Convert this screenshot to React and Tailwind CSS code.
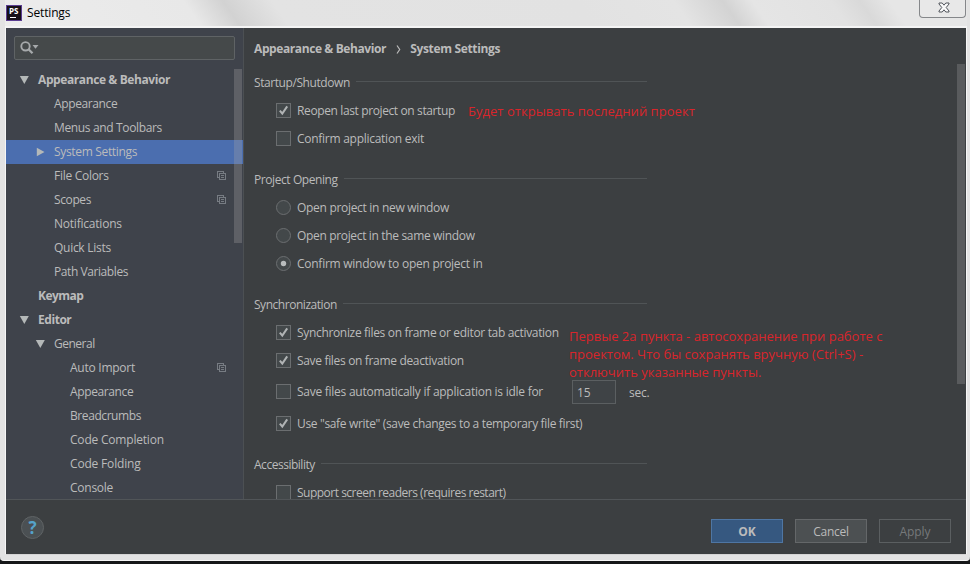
import React from "react";

const tree = [
  { label: "Appearance & Behavior", depth: 0, arrow: "down", bold: true, track: "tracking-[-0.4px]" },
  { label: "Appearance", depth: 1, track: "tracking-[-0.38px]" },
  { label: "Menus and Toolbars", depth: 1, track: "tracking-[-0.35px]" },
  { label: "System Settings", depth: 1, arrow: "right", selected: true, track: "tracking-[-0.33px]" },
  { label: "File Colors", depth: 1, copy: true, track: "tracking-[-0.28px]" },
  { label: "Scopes", depth: 1, copy: true, track: "tracking-[-0.38px]" },
  { label: "Notifications", depth: 1, track: "tracking-[-0.22px]" },
  { label: "Quick Lists", depth: 1, track: "tracking-[-0.28px]" },
  { label: "Path Variables", depth: 1, track: "tracking-[-0.42px]" },
  { label: "Keymap", depth: 0, bold: true, track: "tracking-[-0.55px]" },
  { label: "Editor", depth: 0, arrow: "down", bold: true, track: "tracking-[-0.45px]" },
  { label: "General", depth: 1, arrow: "down", track: "tracking-[-0.5px]" },
  { label: "Auto Import", depth: 2, copy: true, track: "tracking-[-0.25px]" },
  { label: "Appearance", depth: 2, track: "tracking-[-0.38px]" },
  { label: "Breadcrumbs", depth: 2, track: "tracking-[-0.42px]" },
  { label: "Code Completion", depth: 2, track: "tracking-[-0.2px]" },
  { label: "Code Folding", depth: 2, track: "tracking-[-0.18px]" },
  { label: "Console", depth: 2, track: "tracking-[-0.25px]" },
];

const indents = ["pl-[13px]", "pl-[29px]", "pl-[45px]"];

function Arrow({ dir }) {
  return (
    <svg className="w-[10px] h-[10px] shrink-0 fill-[#b4b8b8]" viewBox="0 0 10 10">
      {dir === "down" && <path d="M0.8 1H9.8L5.3 9Z" />}
      {dir === "right" && <path d="M1.8 0.8V9.2L9.5 5Z" />}
    </svg>
  );
}

function CopyIcon() {
  return (
    <svg className="w-[10px] h-[10px] shrink-0 fill-none stroke-[#777c83]" viewBox="0 0 10 10" shapeRendering="crispEdges">
      <path d="M2.5 6.5H0.5V0.5H6.5V2.5" />
      <rect x="2.5" y="2.5" width="6" height="6" />
      <path d="M4 4.5H7M4 6.5H7" />
    </svg>
  );
}

function TreeRow({ item }) {
  return (
    <div className={`flex h-6 shrink-0 items-center pr-4 ${indents[item.depth]} ${item.selected ? "bg-[#4b6eaf]" : ""}`}>
      <Arrow dir={item.arrow} />
      <span className={`ml-[9px] flex-1 whitespace-nowrap ${item.bold ? "font-bold" : ""} ${item.track}`}>{item.label}</span>
      {item.copy && <CopyIcon />}
    </div>
  );
}

function Heading({ children, className = "", track = "" }) {
  return (
    <div className={`mb-px flex h-[26px] w-[393px] shrink-0 items-center gap-[6px] ${className}`}>
      <span className={`whitespace-nowrap ${track}`}>{children}</span>
      <div className="mb-1 h-px flex-1 bg-[#505456]" />
    </div>
  );
}

function Check({ on }) {
  return (
    <svg className="mb-px h-[15px] w-[15px] shrink-0" viewBox="0 0 15 15">
      <rect x="0.5" y="0.5" width="14" height="14" fill="#43484a" stroke="#6b6e70" />
      {on && <path d="M3.8 7.6L6.3 10.5L11.2 3.4" fill="none" stroke="#b0b3b4" strokeWidth="2" />}
    </svg>
  );
}

function Radio({ on }) {
  return (
    <svg className="mb-px h-[15px] w-[15px] shrink-0" viewBox="0 0 15 15">
      <circle cx="7.5" cy="7.5" r="7" fill="#43484a" stroke="#6b6e70" />
      {on && <circle cx="7.5" cy="7.5" r="2.7" fill="#b9bcbd" />}
    </svg>
  );
}

function Option({ radio, on, children, height = "h-7", track = "", after }) {
  return (
    <div className={`flex shrink-0 items-center pl-[22px] ${height}`}>
      {radio ? <Radio on={on} /> : <Check on={on} />}
      <span className={`ml-[6px] whitespace-nowrap ${track}`}>{children}</span>
      {after}
    </div>
  );
}

function Sidebar() {
  return (
    <aside className="relative flex w-[237px] shrink-0 flex-col overflow-hidden bg-[#3f434b]">
      <div className="mx-2 mt-2 mb-2 flex h-6 shrink-0 items-center rounded-[2px] border border-[#5f6365] bg-[#45494a] pl-[5px]">
        <svg className="h-[14px] w-[19px]" viewBox="0 0 19 14" fill="none">
          <circle cx="5.5" cy="5.3" r="4.2" stroke="#a6a9ab" strokeWidth="1.9" />
          <path d="M8.5 8.3L12.5 12.3" stroke="#a6a9ab" strokeWidth="2.3" />
          <path d="M12.5 4H18.5L15.5 7.7Z" fill="#a6a9ab" />
        </svg>
      </div>
      {tree.map((item, i) => (
        <TreeRow key={i} item={item} />
      ))}
      <div className="absolute top-[41px] left-[228px] h-[174px] w-2 bg-[#a6a6a6]/30" />
    </aside>
  );
}

function Content() {
  return (
    <main className="relative flex flex-1 flex-col overflow-hidden border-l border-[#4c5053] pl-[10px]">
      <div className="flex h-[42px] shrink-0 items-center font-bold">
        <span className="whitespace-nowrap tracking-[-0.4px]">Appearance &amp; Behavior</span>
        <svg className="mr-[9px] ml-[10px] h-[9px] w-[5px]" viewBox="0 0 5 9" fill="none" stroke="#bbbbbb" strokeWidth="1.2">
          <path d="M1 0.5L3.7 4.5L1 8.5" />
        </svg>
        <span className="whitespace-nowrap tracking-[-0.33px]">System Settings</span>
      </div>
      <Heading track="tracking-[-0.42px]">Startup/Shutdown</Heading>
      <Option
        on
        track="tracking-[-0.38px]"
        after={
          <span className="ml-[13px] text-[13px] tracking-[0.04px] whitespace-nowrap text-[#d9252b]">
            Будет открывать последний проект
          </span>
        }
      >
        Reopen last project on startup
      </Option>
      <Option track="tracking-[-0.27px]">Confirm application exit</Option>
      <Heading className="mt-[14px]" track="tracking-[-0.42px]">Project Opening</Heading>
      <Option radio track="tracking-[-0.3px]">Open project in new window</Option>
      <Option radio track="tracking-[-0.34px]">Open project in the same window</Option>
      <Option radio on track="tracking-[-0.26px]">Confirm window to open project in</Option>
      <Heading className="mt-[14px]" track="tracking-[-0.46px]">Synchronization</Heading>
      <Option on track="tracking-[-0.33px]">Synchronize files on frame or editor tab activation</Option>
      <Option on track="tracking-[-0.33px]">Save files on frame deactivation</Option>
      <div className="flex h-[34px] shrink-0 items-center">
        <div className="w-[318px]">
          <Option track="tracking-[-0.26px]">Save files automatically if application is idle for</Option>
        </div>
        <div className="flex h-6 w-11 items-center border border-[#5b5f61] bg-[#3f4346] pt-px pl-1">15</div>
        <span className="ml-[13px] pt-px tracking-[-0.2px]">sec.</span>
      </div>
      <Option on height="h-[30px]" track="tracking-[-0.34px]">Use "safe write" (save changes to a temporary file first)</Option>
      <Heading className="mt-[13px]" track="tracking-[-0.48px]">Accessibility</Heading>
      <Option track="tracking-[-0.5px]">Support screen readers (requires restart)</Option>
      <div className="absolute top-[299px] left-[325px] text-[13px] leading-[18px] whitespace-nowrap text-[#d9252b]">
        <div>Первые 2а пункта - автосохранение при работе с</div>
        <div>проектом. Что бы сохранять вручную (Ctrl+S) -</div>
        <div>отключить указанные пункты.</div>
      </div>
      <div className="absolute top-[36px] left-[713px] h-[320px] w-2 bg-[#595b5d]" />
    </main>
  );
}

function Footer() {
  return (
    <footer className="flex h-[55px] shrink-0 items-center border-t border-[#515558] pr-[15px] pl-[15px]">
      <div className="flex h-[23px] w-[23px] items-center justify-center rounded-full border border-[#5f6365] bg-[#4b5053] text-[17px] leading-none font-bold text-[#55a3cb]">
        ?
      </div>
      <div className="mt-2 ml-auto flex gap-3">
        <div className="flex h-6 w-[72px] items-center justify-center border border-[#4f76a3] bg-[#365880] pt-px font-bold">OK</div>
        <div className="flex h-6 w-[72px] items-center justify-center border border-[#646769] bg-[#4c5052] pt-px tracking-[-0.25px]">Cancel</div>
        <div className="flex h-6 w-[72px] items-center justify-center border border-[#5b5f61] pt-px tracking-[-0.1px] text-[#76797b]">Apply</div>
      </div>
    </footer>
  );
}

export default function App() {
  return (
    <div className="flex h-[564px] w-[970px] flex-col overflow-hidden bg-[#151718] font-['Open_Sans','Noto_Sans',sans-serif] text-[12px] leading-4 text-[#bbbbbb]">
      <div className="flex h-[561px] flex-col rounded-b-[4px] border-b border-[#f5f5f5] bg-[#e3e3e3] pr-[3px] pb-[5px] pl-[5px]">
        <header className="flex h-[26px] shrink-0 items-start justify-between bg-[linear-gradient(55deg,#ececec_0%,#e8e8e8_20%,#d2d2d2_24%,#e3e3e3_29%,#e2e2e2_60%,#e4e4e4_70%,#d3d3d3_75%,#e5e5e5_78%,#e2e2e2_86%,#d9d9d9_89%,#e6e6e6_92%)]">
          <div className="flex h-[26px] items-center">
            <div className="ml-px flex h-4 w-4 flex-col items-start border border-[#5a3d91] bg-[#171018] pl-[2px] text-[8px] leading-[9px] font-bold text-white">
              PS
              <div className="mt-[2px] ml-px h-px w-[6px] bg-white" />
            </div>
            <span className="ml-[5px] tracking-[-0.15px] text-black">Settings</span>
          </div>
          <div className="mr-px flex h-[18px] w-[47px] items-center justify-center rounded-b-[4px] border border-t-0 border-[#85878a] bg-[#e8e8e8]">
            <svg className="mt-[-2px] ml-[2px] h-[11px] w-[12px]" viewBox="0 0 12 11">
              <path d="M1 1H4.2L6 3.2L7.8 1H11V2L8.2 5.5L11 9V10H7.8L6 7.8L4.2 10H1V9L3.8 5.5L1 2Z" fill="#fafafa" stroke="#50545b" />
            </svg>
          </div>
        </header>
        <div className="flex min-h-0 flex-1 flex-col border border-t-2 border-[#f6f6f6] border-t-[#f4f4f4] border-b-[#d5d5d5] bg-[#3c3f41]">
          <div className="flex min-h-0 flex-1">
            <Sidebar />
            <Content />
          </div>
          <Footer />
        </div>
      </div>
    </div>
  );
}
